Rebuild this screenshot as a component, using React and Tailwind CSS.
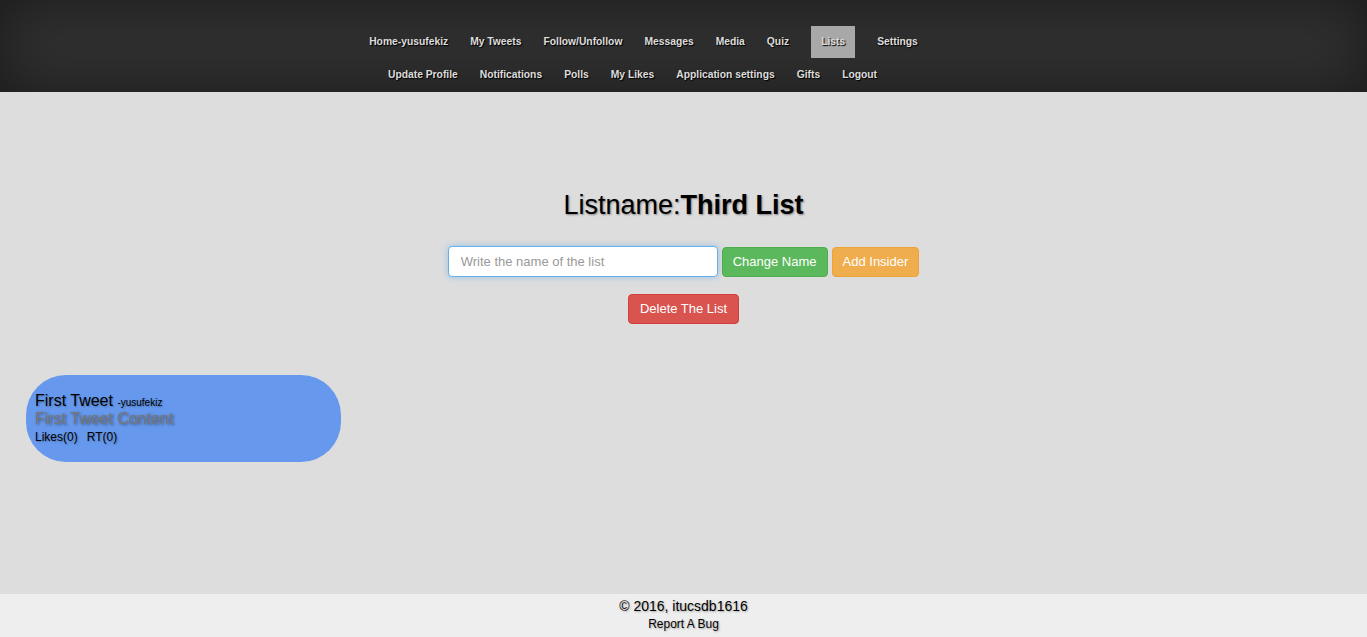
import React from 'react';

const topLinks=['Home-yusufekiz','My Tweets','Follow/Unfollow','Messages','Media','Quiz','Lists','Settings'];
const bottomLinks=['Update Profile','Notifications','Polls','My Likes','Application settings','Gifts','Logout'];

const NavRow=({links, active, className})=>(
  <ul className={`flex justify-center items-center h-[33px] ${className}`}>
    {links.map((l)=>(
      <li key={l}>
        <a
          href="#"
          className={`block leading-[32px] text-[10.3px] font-bold text-[#dddddd] [text-shadow:1px_1px_1px_#000] ${l===active?'mx-[11px] px-[10px] bg-[#a8a8a8]':'px-[11px]'}`}
        >
          {l}
        </a>
      </li>
    ))}
  </ul>
);

export default function App() {
  return (
    <div className="min-h-[637px] flex flex-col bg-[#dddddd] font-['Liberation_Sans',Arial,sans-serif]">
      <header className="h-[92px] pt-[25px] bg-[#303030] shadow-[inset_0_0_60px_rgba(0,0,0,0.45)]">
        <NavRow links={topLinks} active="Lists" className="pr-[80px]"/>
        <NavRow links={bottomLinks} className="pr-[102px]"/>
      </header>

      <main className="flex-grow">
        <div className="pt-[97px] text-center">
          <h1 className="text-[27px] leading-[32px] text-black [text-shadow:1px_1px_2px_rgba(0,0,0,0.4)]">
            Listname:<b>Third List</b>
          </h1>
          <div className="mt-[25px] flex justify-center items-center gap-[4px]">
            <input
              type="text"
              placeholder="Write the name of the list"
              className="w-[270px] h-[31px] px-[12px] text-[13px] bg-white border border-[#66afe9] rounded-[4px] shadow-[0_0_6px_rgba(102,175,233,0.6)] outline-none placeholder:text-[#999999]"
            />
            <button className="h-[30px] px-[10px] text-[13px] text-white bg-[#5cb85c] border border-[#4cae4c] rounded-[4px]">Change Name</button>
            <button className="h-[30px] px-[10px] text-[13px] text-white bg-[#f0ad4e] border border-[#eea236] rounded-[4px]">Add Insider</button>
          </div>
          <div className="mt-[17px] flex justify-center">
            <button className="h-[30px] px-[11px] text-[13px] text-white bg-[#d9534f] border border-[#d43f3a] rounded-[4px]">Delete The List</button>
          </div>
        </div>

        <div className="mt-[51px] ml-[26px] w-[315px] h-[87px] rounded-[40px] bg-[#6699ee] px-[9px] pt-[19px]">
          <div className="text-[16px] leading-[14px] text-black [text-shadow:1px_1px_2px_rgba(0,0,0,0.3)]">
            First Tweet <span className="text-[10px]">-yusufekiz</span>
          </div>
          <div className="text-[16px] leading-[17px] text-[#777777] [text-shadow:1px_1px_3px_rgba(0,0,0,0.5)]">First Tweet Content</div>
          <div className="mt-[3px] text-[12px] leading-[15px] text-black [text-shadow:1px_1px_2px_rgba(0,0,0,0.3)]">
            Likes(0)<span className="ml-[9px]">RT(0)</span>
          </div>
        </div>
      </main>

      <footer className="h-[43px] bg-[#eeeeee] text-center text-black pt-[4px]">
        <div className="text-[14px] leading-[17px] [text-shadow:1px_1px_2px_rgba(0,0,0,0.3)]">© 2016, itucsdb1616</div>
        <a href="#" className="block text-[12px] leading-[18px] [text-shadow:1px_1px_2px_rgba(0,0,0,0.3)]">Report A Bug</a>
      </footer>
    </div>
  );
}
